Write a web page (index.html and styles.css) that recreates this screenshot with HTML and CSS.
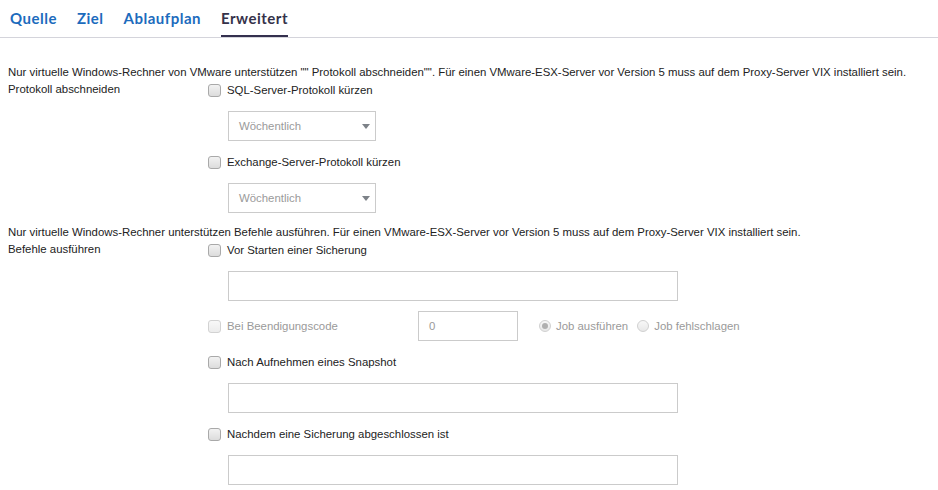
FILE: index.html
```html
<!DOCTYPE html>
<html>
<head>
<title>Erweitert</title>
<link rel="stylesheet" href="styles.css">
</head>
<body>
<ul class="tabs">
    <li><a href="#">Quelle</a></li>
    <li><a href="#">Ziel</a></li>
    <li><a href="#">Ablaufplan</a></li>
    <li class="active"><a href="#">Erweitert</a></li>
</ul>

<div class="page">
    <p class="note">Nur virtuelle Windows-Rechner von VMware unterstützen "" Protokoll abschneiden"". Für einen VMware-ESX-Server vor Version 5 muss auf dem Proxy-Server VIX installiert sein.</p>
    <div class="group">
        <div class="label">Protokoll abschneiden</div>
        <div class="fields">
            <label class="check"><span class="box"></span>SQL-Server-Protokoll kürzen</label>
            <div class="select">Wöchentlich<span class="arrow"></span></div>
            <label class="check"><span class="box"></span>Exchange-Server-Protokoll kürzen</label>
            <div class="select">Wöchentlich<span class="arrow"></span></div>
        </div>
    </div>

    <p class="note note2">Nur virtuelle Windows-Rechner unterstützen Befehle ausführen. Für einen VMware-ESX-Server vor Version 5 muss auf dem Proxy-Server VIX installiert sein.</p>
    <div class="group">
        <div class="label">Befehle ausführen</div>
        <div class="fields">
            <label class="check"><span class="box"></span>Vor Starten einer Sicherung</label>
            <div class="input"></div>
            <div class="exit">
                <label class="check disabled"><span class="box"></span>Bei Beendigungscode</label>
                <div class="input small">0</div>
                <label class="radio"><span class="dot on"></span>Job ausführen</label>
                <label class="radio"><span class="dot"></span>Job fehlschlagen</label>
            </div>
            <label class="check"><span class="box"></span>Nach Aufnehmen eines Snapshot</label>
            <div class="input"></div>
            <label class="check"><span class="box"></span>Nachdem eine Sicherung abgeschlossen ist</label>
            <div class="input"></div>
        </div>
    </div>
</div>
</body>
</html>
```

FILE: styles.css
```css
* {
    margin: 0;
    padding: 0;
    box-sizing: border-box;
    list-style: none;
    text-decoration: none;
}

body {
    background: #fff;
    color: #222;
    font-family: "Liberation Sans", Arial, sans-serif;
    font-size: 11.4px;
}

.tabs {
    display: flex;
    height: 38px;
    padding-left: 10px;
    border-bottom: 1px solid #d4d4db;
}

.tabs li {
    margin-right: 20px;
    height: 37px;
    border-bottom: 2px solid transparent;
}

.tabs li a {
    display: block;
    padding-top: 8px;
    line-height: 20px;
    font-family: Lato, "Liberation Sans", sans-serif;
    font-weight: 700;
    font-size: 15px;
    letter-spacing: 0.5px;
    color: #1c6bbd;
}

.tabs li.active {
    border-bottom-color: #34304e;
}

.tabs li.active a {
    color: #35324a;
}

.page {
    padding: 0 8px;
}

.note {
    margin-top: 25px;
    line-height: 18px;
    white-space: nowrap;
}

.note2 {
    margin-top: 10px;
}

.group {
    display: flex;
}

.label {
    width: 200px;
    line-height: 16px;
}

.fields {
    display: flex;
    flex-direction: column;
    gap: 12px;
}

.check,
.radio {
    display: flex;
    align-items: center;
    height: 18px;
    line-height: 18px;
}

.box {
    width: 13px;
    height: 13px;
    margin-right: 6px;
    border: 1px solid #a9a9a9;
    border-radius: 3px;
    background: linear-gradient(#f2f2f2, #dcdcdc);
}

.select {
    position: relative;
    width: 148px;
    height: 30px;
    margin-left: 20px;
    padding-left: 10px;
    line-height: 28px;
    border: 1px solid #cbcbcb;
    color: #9a9a9a;
}

.select .arrow {
    position: absolute;
    right: 5px;
    top: 12px;
    width: 0;
    height: 0;
    border-left: 4px solid transparent;
    border-right: 4px solid transparent;
    border-top: 5px solid #7d8288;
}

.input {
    width: 450px;
    height: 30px;
    margin-left: 20px;
    border: 1px solid #cbcbcb;
}

.exit {
    display: flex;
    align-items: center;
    height: 30px;
    margin-top: -2px;
}

.exit .check {
    width: 210px;
}

.input.small {
    width: 100px;
    margin-left: 0;
    margin-right: 21px;
    padding-left: 10px;
    line-height: 28px;
    color: #9a9a9a;
}

.disabled,
.radio {
    color: #9a9a9a;
}

.disabled .box {
    border-color: #d2d2d2;
    background: linear-gradient(#f8f8f8, #ececec);
}

.radio {
    margin-right: 9px;
}

.dot {
    position: relative;
    width: 12px;
    height: 12px;
    margin-right: 5px;
    border: 1px solid #d0d0d0;
    border-radius: 50%;
    background: linear-gradient(#f8f8f8, #e8e8e8);
}

.dot.on:after {
    content: '';
    position: absolute;
    left: 2px;
    top: 2px;
    width: 6px;
    height: 6px;
    border-radius: 50%;
    background: #b0b0b0;
}
```
